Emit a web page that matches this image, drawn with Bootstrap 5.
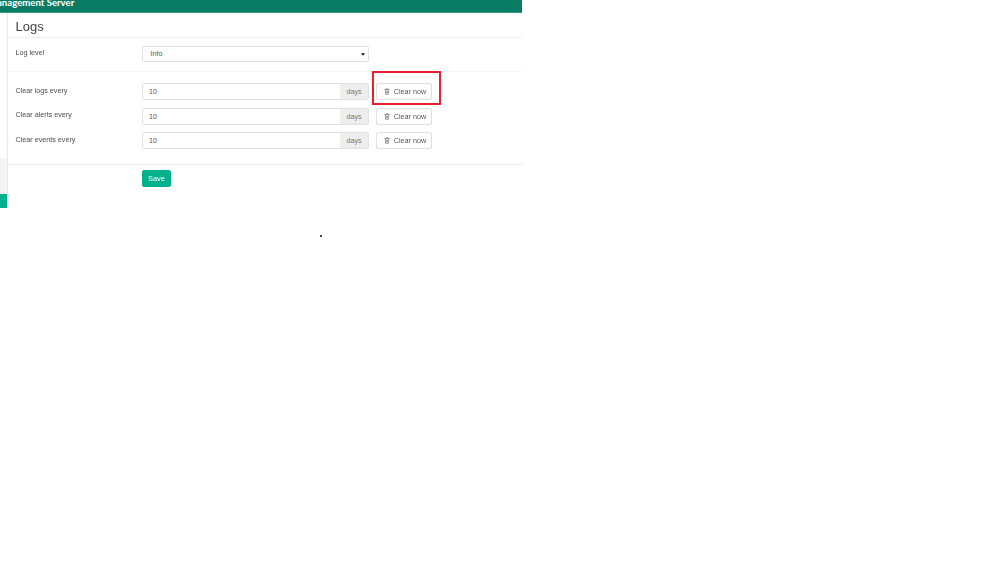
<!DOCTYPE html>
<html lang="en">
<head>
<meta charset="utf-8">
<title>Logs</title>
<link href="https://cdn.jsdelivr.net/npm/bootstrap@5.3.0/dist/css/bootstrap.min.css" rel="stylesheet">
<style>
html,body{margin:0;background:#fff;overflow:hidden}
body{font-family:"Liberation Sans",Arial,sans-serif;color:#555;position:relative;height:562px}
.shell{width:521.5px;opacity:.999}
.topstrip{height:13px;background:#0a7c64;border-bottom:1px solid #3a9a85;color:#fff;overflow:hidden;white-space:nowrap;font-family:Lato,sans-serif;font-weight:700;font-size:9.6px;line-height:5px;padding:0;text-indent:-3px}
.rail{width:8px;flex:none;height:195px;border-right:1px solid #e9e9e9;background:#fff}
.rail-gray{height:36px;margin-top:145px;background:#f3f3f3}
.rail-green{height:14px;background:#00b08c}
.content{flex:1;min-width:0}
.page-title{font-size:13px;font-weight:400;color:#444;margin:0;height:25px;line-height:27px;padding-left:7.5px;border-bottom:1px solid #eee;font-family:"Liberation Sans",Arial,sans-serif}
.lbl{width:134px;flex:none;font-size:7.2px;line-height:10px;color:#4d4d4d;padding-left:7.5px}
.setting{display:flex}
.level-row{padding-top:8px;height:34px;border-bottom:1px solid #f5f5f5}
.level-row .lbl{padding-top:2px}
.clear-rows{padding-top:11px;height:93px;border-bottom:1px solid #e8e8e8}
.clear-rows .setting{height:24.6px}
.clear-rows .lbl{padding-top:2.6px}
.fake-select{width:227px;height:16px;border:1px solid #e0e0e0;border-radius:2px;font-size:7.2px;line-height:14px;padding-left:7.5px;color:#555;position:relative;background:#fff}
.fake-select::after{content:"";position:absolute;right:3px;top:5.5px;border-left:2px solid transparent;border-right:2px solid transparent;border-top:3px solid #333}
.num-group{width:227px;height:17px;display:flex;border:1px solid #e0e0e0;border-radius:2px;font-size:7.2px;line-height:15px;overflow:hidden}
.num-val{flex:1;padding-left:6px;color:#555;background:#fff}
.num-unit{width:28px;background:#eee;text-align:center;color:#777}
.clear-btn{margin-left:7px;width:56px;height:17px;border:1px solid #e0e0e0;border-radius:2px;background:#fff;color:#555;font-size:7.2px;line-height:15px;padding:0 0 0 2px;display:flex;align-items:center;justify-content:center;gap:4px}
.clear-btn svg{width:6px;height:7px}
.save-wrap{padding:5px 0 0 134px}
.save-btn{display:block;width:29px;height:17px;border:1px solid #00b08c;border-radius:2px;background:#00b08c;color:#fff;font-size:7.5px;line-height:15px;padding:0}
.highlight{position:absolute;left:372px;top:71px;width:69px;height:34px;border:2px solid #e81f2d;pointer-events:none}
.cursor-dot{position:absolute;left:320px;top:235px;width:2px;height:2px;background:#444}
</style>
</head>
<body>
<div class="shell">
  <div class="topstrip">anagement Server</div>
  <div class="d-flex">
    <div class="rail"><div class="rail-gray"></div><div class="rail-green"></div></div>
    <div class="content">
      <h1 class="page-title">Logs</h1>
      <div class="setting level-row">
        <div class="lbl">Log level</div>
        <div class="fake-select">Info</div>
      </div>
      <div class="clear-rows">
        <div class="setting">
          <div class="lbl">Clear logs every</div>
          <div class="num-group"><div class="num-val">10</div><div class="num-unit">days</div></div>
          <button type="button" class="btn clear-btn"><svg viewBox="0 0 12 14"><path d="M1 3h10M4.5 3V1.5h3V3M2.5 3l.6 9.5h5.8l.6-9.5M5 5.5v5M7 5.5v5" fill="none" stroke="#666" stroke-width="1.2"/></svg>Clear now</button>
        </div>
        <div class="setting">
          <div class="lbl">Clear alerts every</div>
          <div class="num-group"><div class="num-val">10</div><div class="num-unit">days</div></div>
          <button type="button" class="btn clear-btn"><svg viewBox="0 0 12 14"><path d="M1 3h10M4.5 3V1.5h3V3M2.5 3l.6 9.5h5.8l.6-9.5M5 5.5v5M7 5.5v5" fill="none" stroke="#666" stroke-width="1.2"/></svg>Clear now</button>
        </div>
        <div class="setting">
          <div class="lbl">Clear events every</div>
          <div class="num-group"><div class="num-val">10</div><div class="num-unit">days</div></div>
          <button type="button" class="btn clear-btn"><svg viewBox="0 0 12 14"><path d="M1 3h10M4.5 3V1.5h3V3M2.5 3l.6 9.5h5.8l.6-9.5M5 5.5v5M7 5.5v5" fill="none" stroke="#666" stroke-width="1.2"/></svg>Clear now</button>
        </div>
      </div>
      <div class="save-wrap"><button type="button" class="btn save-btn">Save</button></div>
    </div>
  </div>
</div>
<div class="highlight"></div>
<div class="cursor-dot"></div>
<script src="https://cdn.jsdelivr.net/npm/bootstrap@5.3.0/dist/js/bootstrap.bundle.min.js"></script>
</body>
</html>
